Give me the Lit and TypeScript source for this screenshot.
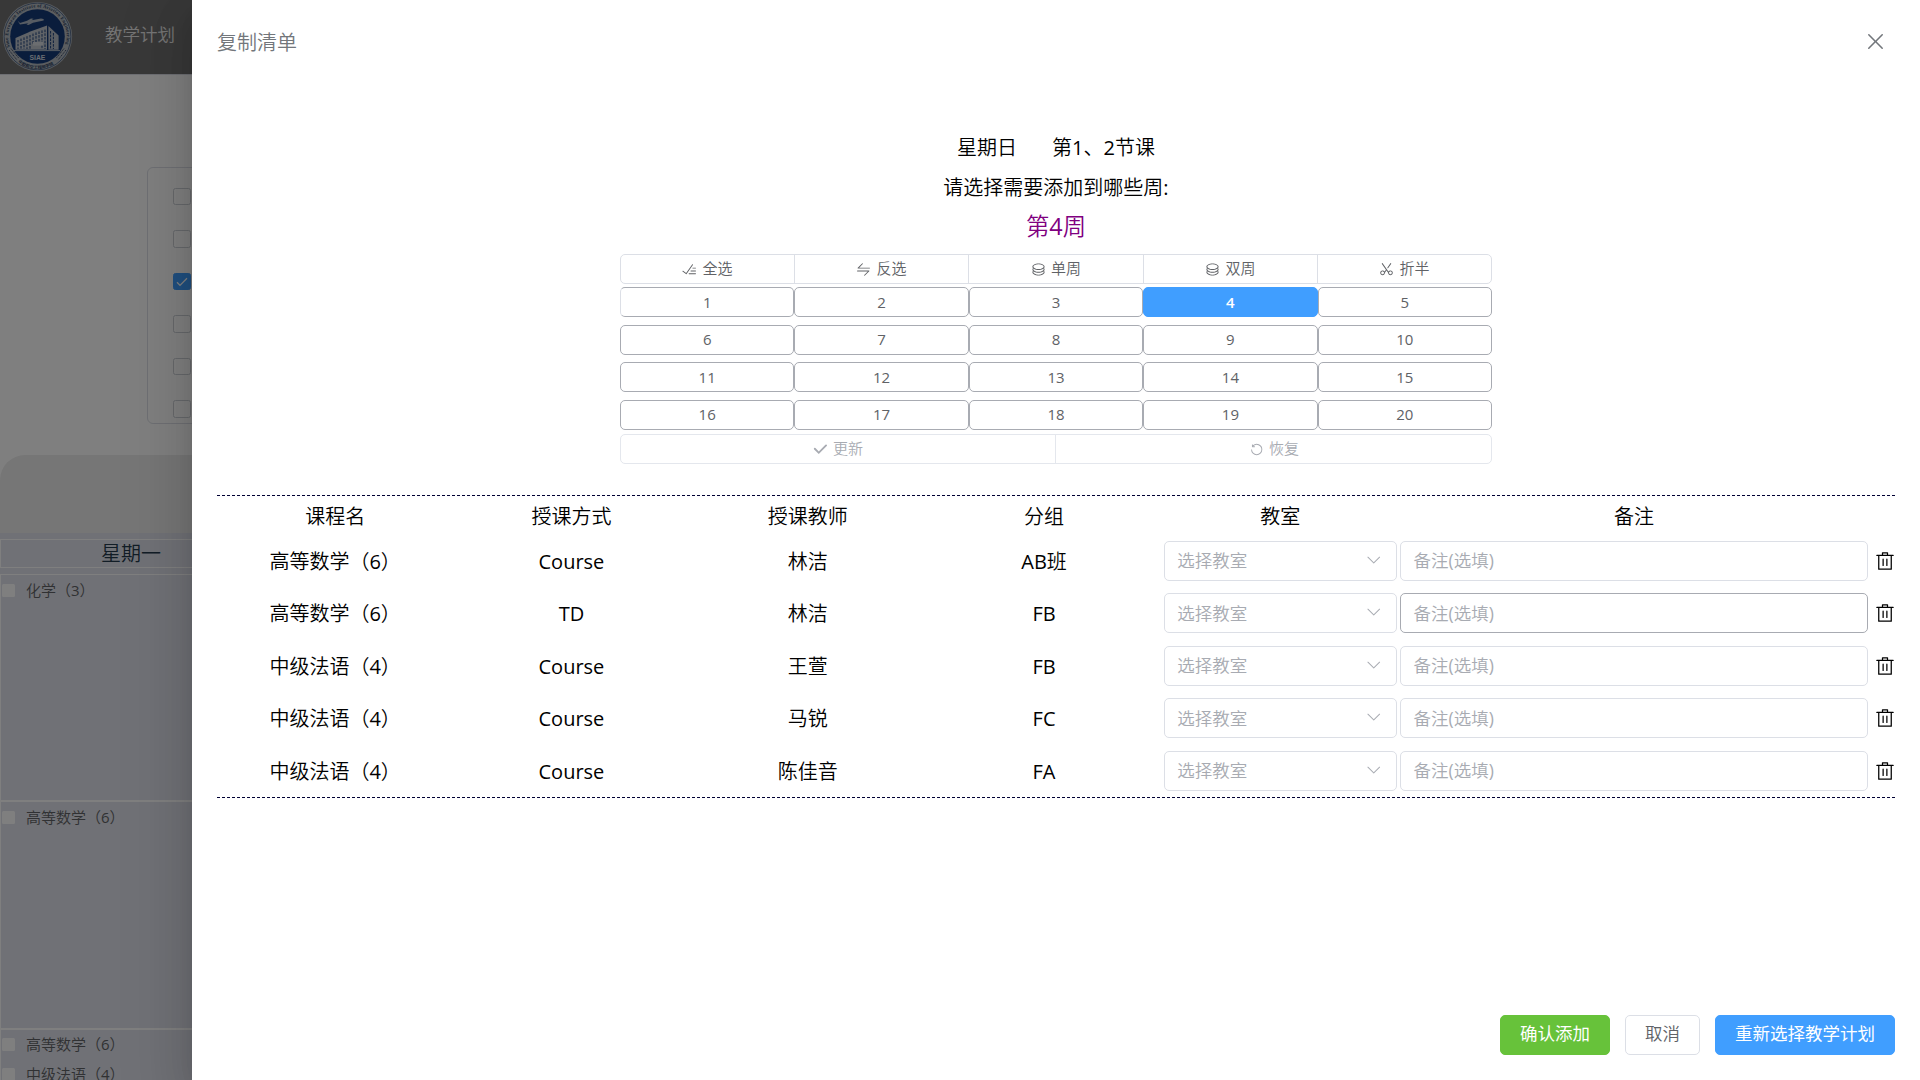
import { LitElement, html, css, svg } from "lit";
import { customElement, property } from "lit/decorators.js";
import { classMap } from "lit/directives/class-map.js";

const ICONS: Record<string, string[]> = {
  close: [
    "M764.288 214.592 512 466.88 259.712 214.592a31.936 31.936 0 0 0-45.12 45.12L466.752 512 214.528 764.224a31.936 31.936 0 1 0 45.12 45.184L512 557.184l252.288 252.288a31.936 31.936 0 0 0 45.12-45.12L557.12 512.064l252.288-252.352a31.936 31.936 0 1 0-45.12-45.184z",
  ],
  select: [
    "M77.248 415.04a64 64 0 0 1 90.496 0l226.304 226.304L846.528 188.8a64 64 0 1 1 90.56 90.496l-543.04 543.04-316.8-316.8a64 64 0 0 1 0-90.496z",
  ],
  arrow: [
    "M831.872 340.864 512 652.672 192.128 340.864a30.592 30.592 0 0 0-42.752 0 29.12 29.12 0 0 0 0 41.6L489.664 714.24a32 32 0 0 0 44.672 0l340.288-331.712a29.12 29.12 0 0 0 0-41.728 30.592 30.592 0 0 0-42.752 0z",
  ],
  trash: [
    "M160 256H96a32 32 0 0 1 0-64h256V95.936a32 32 0 0 1 32-32h256a32 32 0 0 1 32 32V192h256a32 32 0 1 1 0 64h-64v672a32 32 0 0 1-32 32H192a32 32 0 0 1-32-32V256zm448-64v-64H416v64h192zM224 896h576V256H224v640zm192-128a32 32 0 0 1-32-32V416a32 32 0 0 1 64 0v320a32 32 0 0 1-32 32zm192 0a32 32 0 0 1-32-32V416a32 32 0 0 1 64 0v320a32 32 0 0 1-32 32z",
  ],
  coin: [
    "m161.92 580.736 29.888 58.88C171.328 659.776 160 681.728 160 704c0 82.304 155.328 160 352 160s352-77.696 352-160c0-22.272-11.392-44.16-31.808-64.32l30.464-58.432C903.936 615.808 928 657.664 928 704c0 129.728-188.544 224-416 224S96 833.728 96 704c0-46.592 24.32-88.576 65.92-123.264z",
    "m161.92 388.736 29.888 58.88C171.328 467.84 160 489.792 160 512c0 82.304 155.328 160 352 160s352-77.696 352-160c0-22.272-11.392-44.16-31.808-64.32l30.464-58.432C903.936 423.808 928 465.664 928 512c0 129.728-188.544 224-416 224S96 641.728 96 512c0-46.592 24.32-88.576 65.92-123.264z",
    "M512 544c-227.456 0-416-94.272-416-224S284.544 96 512 96s416 94.272 416 224-188.544 224-416 224zm0-64c196.672 0 352-77.696 352-160S708.672 160 512 160s-352 77.696-352 160 155.328 160 352 160z",
  ],
  scissor: [
    "m512.064 578.368-106.88 152.768a160 160 0 1 1-23.36-78.208L472.96 522.56 196.864 128.256a32 32 0 1 1 52.48-36.736l393.024 561.344a160 160 0 1 1-23.36 78.208l-106.88-152.704zm54.4-189.248 208.384-297.6a32 32 0 0 1 52.48 36.736l-221.76 316.672-39.04-55.808zm-376.32 425.856a96 96 0 1 0 110.144-157.248 96 96 0 0 0-110.08 157.248zm643.84 0a96 96 0 1 0-110.08-157.248 96 96 0 0 0 110.08 157.248z",
  ],
  swap: [
    "M118.656 438.656a32 32 0 0 1 0-45.248L416 96l4.48-3.776A32 32 0 0 1 461.248 96l3.712 4.48a32.064 32.064 0 0 1-3.712 40.832L218.56 384H928a32 32 0 1 1 0 64H141.248a32 32 0 0 1-22.592-9.344zM64 608a32 32 0 0 1 32-32h786.752a32 32 0 0 1 22.656 54.592L608 928l-4.48 3.776a32.064 32.064 0 0 1-40.832-49.024L805.632 640H96a32 32 0 0 1-32-32z",
  ],
  refresh: [
    "M289.088 296.704h92.992a32 32 0 0 1 0 64H232.96a32 32 0 0 1-32-32V179.712a32 32 0 0 1 64 0v50.56a384 384 0 0 1 643.84 282.88 384 384 0 0 1-383.936 384 384 384 0 0 1-384-384h64a320 320 0 1 0 640 0 320 320 0 0 0-555.712-216.448z",
  ],
  finished: [
    "M280.768 753.728 691.456 167.04a32 32 0 1 1 52.416 36.672L314.24 817.472a32 32 0 0 1-45.44 7.296l-230.4-172.8a32 32 0 0 1 38.4-51.2l203.968 152.96zM736 448a32 32 0 1 1 0-64h192a32 32 0 1 1 0 64H736zM608 640a32 32 0 0 1 0-64h319.936a32 32 0 1 1 0 64H608zM480 832a32 32 0 1 1 0-64h447.936a32 32 0 1 1 0 64H480z",
  ],
};

@customElement("ui-icon")
class UiIcon extends LitElement {
  @property() name = "close";
  static styles = css`
    :host { display: inline-flex; width: 1em; height: 1em; flex: none; }
    .glyph { width: 100%; height: 100%; fill: currentColor; display: block; }
  `;
  render() {
    return html`<svg class="glyph" viewBox="0 0 1024 1024">
      ${(ICONS[this.name] ?? []).map((d) => svg`<path d=${d} />`)}
    </svg>`;
  }
}

@customElement("school-logo")
class SchoolLogo extends LitElement {
  static styles = css`
    :host { display: block; width: 74px; height: 74px; }
    .art { width: 74px; height: 74px; display: block; overflow: visible; }
    .ring-text { font: 700 4.6px "Liberation Serif", serif; fill: #2a3c5c; }
    .ring-cjk { font: 700 4.2px "Noto Sans CJK SC", sans-serif; fill: #2a3c5c; }
    .abbr { font: 700 6.8px "Liberation Sans", sans-serif; fill: #d3dae4; }
  `;
  render() {
    return html`<svg class="art" viewBox="0 0 74 74">
      <defs>
        <path id="arcTop" d="M10.1 47 A29.3 29.3 0 1 1 64.9 47" />
        <path id="arcBottom" d="M18 62.3 A32 32 0 0 0 57 62.3" />
      </defs>
      <circle cx="37.5" cy="36.5" r="34.6" fill="#b4bac0" />
      <circle cx="37.5" cy="36.5" r="33.4" fill="none" stroke="#2f4a76" stroke-width="0.7" />
      <circle cx="37.5" cy="36.5" r="27.3" fill="#153a78" />
      <text class="ring-text" textLength="110"><textPath href="#arcTop">Sino European Institute of Aviation Engineering</textPath></text>
      <path d="M9 50 L17 60 M11 48.6 L19 58.4 M66 50 L58 60 M64 48.6 L56 58.4" stroke="#2a3c5c" stroke-width="0.9" stroke-dasharray="1.4 0.7" />
      <text class="ring-cjk"><textPath href="#arcBottom">中欧航空工程师学院</textPath></text>
      <path d="M17.5 20.5 L20 23 L27 20.8 L31 18.6 L33.5 18.8 L31.5 20.2 L41 18.6 Q44.5 18.6 43.6 20.4 L33 22.8 L28.5 25 L26.5 24.6 L28.5 23.2 L20 24.6 Z" fill="#aeb9c6" />
      <path d="M15.5 38 L31 31.2 L47 25.6 V49.8 H15.5 Z" fill="#c0c7cf" />
      <path d="M48.4 26 L58.6 35.4 V49.8 H48.4 Z" fill="#b7bec8" />
      <path d="M18 40 V49 M21 38.6 V49 M24 37.4 V49 M27 36.2 V49 M30 35 V49 M33 33.6 V44 M36 32.4 V44 M39 31.4 V44 M42 30.4 V49 M45 29.6 V49 M50.6 31 V49 M53.4 33 V49" stroke="#1b3f7a" stroke-width="1" stroke-dasharray="2.6 1.1" />
      <rect x="33" y="42" width="10" height="3.6" fill="#d7dbe0" />
      <path d="M14 50.6 H60" stroke="#c0c7cf" stroke-width="0.9" />
      <text class="abbr" x="37.5" y="60" text-anchor="middle" textLength="15.8">SIAE</text>
    </svg>`;
  }
}

type Course = { name: string; mode: string; teacher: string; group: string; hover?: boolean };

const COURSES: Course[] = [
  { name: "高等数学（6）", mode: "Course", teacher: "林洁", group: "AB班" },
  { name: "高等数学（6）", mode: "TD", teacher: "林洁", group: "FB", hover: true },
  { name: "中级法语（4）", mode: "Course", teacher: "王萱", group: "FB" },
  { name: "中级法语（4）", mode: "Course", teacher: "马锐", group: "FC" },
  { name: "中级法语（4）", mode: "Course", teacher: "陈佳音", group: "FA" },
];

const TOOLS = [
  ["finished", "全选"],
  ["swap", "反选"],
  ["coin", "单周"],
  ["coin", "双周"],
  ["scissor", "折半"],
];

const SLOTS = [["化学（3）"], ["高等数学（6）"], ["高等数学（6）", "中级法语（4）"]];

/** Chinese runs are set in a lighter weight; Latin letters and digits stay regular. */
const mixed = (text: string) =>
  text
    .split(/([A-Za-z0-9():]+)/)
    .filter(Boolean)
    .map((part) => (/^[A-Za-z0-9():]/.test(part) ? html`<span class="latin">${part}</span>` : part));

@customElement("app-root")
class AppRoot extends LitElement {
  static styles = css`
    :host { display: block; font-family: "Open Sans", "Noto Sans CJK SC", sans-serif; font-weight: 350; color: #000; }
    * { box-sizing: border-box; }
    .latin { font-weight: 400; }
    .stage { position: relative; width: 1920px; height: 1080px; overflow: hidden; background: #fff; }

    .page { display: flex; flex-direction: column; width: 1920px; height: 1080px; overflow: hidden; }
    .nav { display: flex; height: 75px; background: #717171; border-bottom: 1px solid #dcdfe6; flex: none; }
    .nav-item { width: 156px; padding-left: 31px; font-size: 17.5px; line-height: 69px; color: #fff; opacity: 0.85; }
    .filters { height: 257px; width: 600px; margin: 92px 0 31px 147px; border: 1px solid #dcdfe6; border-radius: 6px; flex: none;
      display: flex; flex-direction: column; gap: 25px; padding: 19.75px 0 0 25px; }
    .box { width: 18px; height: 17.5px; border: 1px solid #cdd0d6; border-radius: 2.5px; flex: none; display: flex;
      align-items: center; justify-content: center; color: #fff; }
    .box.on { background: #409eff; border-color: #409eff; }
    .tick { width: 12px; height: 10px; fill: none; stroke: #fff; stroke-width: 1.3; }
    .tab { height: 78px; background: #ededed; border-radius: 25px 0 0 0; flex: none; }
    .grid { background: #e1e3ec; flex: none; display: flex; flex-direction: column; padding-top: 6px; }
    .day { height: 29px; margin-bottom: 6px; border: 1px solid #fff; flex: none; font-size: 20px; line-height: 28px; padding-left: 100px; color: #253a4d; }
    .slot { height: 227.5px; border-left: 1px solid #fff; border-bottom: 2px solid #fff; flex: none; }
    .slot:nth-of-type(2) { border-top: 1px solid #fff; height: 228px; }
    .lesson { display: flex; align-items: center; height: 30px; gap: 11px; padding-left: 1px; font-size: 15px; line-height: 20px; color: #606266; }
    .lesson-text { padding-bottom: 1px; }
    .lesson-box { width: 13px; height: 13px; background: #fff; border-radius: 1.5px; }

    .mask { position: absolute; inset: 0; background: rgba(0, 0, 0, 0.5); display: flex; justify-content: flex-end; }
    .drawer { width: 1728px; height: 1080px; background: #fff; display: flex; flex-direction: column; padding: 25px;
      box-shadow: 0 20px 60px 20px rgba(0, 0, 0, 0.08), 0 15px 40px rgba(0, 0, 0, 0.12), 0 10px 20px -10px rgba(0, 0, 0, 0.16); }
    .head { display: flex; justify-content: space-between; align-items: center; height: 33px; padding-right: 7px; color: #72767b; font-size: 20px; flex: none; }
    .close { font-size: 25px; }
    .intro { margin-top: 70px; text-align: center; flex: none; }
    .line { font-size: 20px; line-height: 40px; height: 40px; display: flex; justify-content: center; gap: 35px; }
    .week { font-size: 23.4px; line-height: 37px; height: 37px; color: #800080; }
    .picker { width: 872px; margin: 9px auto 0; font-size: 15px; color: #606266; flex: none; }
    .tools, .acts { display: grid; grid-template-columns: 173px 174px 175px 174px 174px; height: 30px; border: 1px solid #dcdfe6; border-radius: 5px; }
    .acts { grid-template-columns: 434px 436px; color: #a8abb2; border-color: #e4e7ed; margin-top: 4.5px; }
    .tool { display: flex; align-items: center; justify-content: center; gap: 5px; line-height: 20px; border-left: 1px solid #dcdfe6; }
    .label { padding-bottom: 2px; }
    .acts .tool { border-color: #e4e7ed; }
    .acts .tool:last-child { padding-left: 1px; }
    .tool:first-child { border-left: none; }
    .weeks { display: grid; grid-template-columns: repeat(5, 1fr); grid-auto-rows: 30px; row-gap: 7.5px; margin-top: 3px; font-weight: 400; }
    .num { border: 1px solid #a8abb2; border-radius: 5px; display: flex; align-items: center; justify-content: center; padding-bottom: 0.6px; }
    .num.first { border-left-color: #dcdfe6; }
    .num.on { background: #409eff; border-color: #409eff; color: #fff; font-weight: 600; }

    .table { margin-top: 31px; border-top: 1px dashed #000033; border-bottom: 1px dashed #000033; height: 303px; font-size: 20px; flex: none; }
    .row { display: grid; grid-template-columns: repeat(5, 236.3px) 471.2px 1fr; height: 52.5px; align-items: center; text-align: center; }
    .row.title { height: 38.6px; }
    .cell { line-height: 30px; padding-top: 2px; }
    .title .cell { padding-top: 4px; }
    .field { margin: 0 2px; height: 40px; border: 1px solid #dcdfe6; border-radius: 5px; display: flex; align-items: center; justify-content: space-between;
      padding: 0 13.5px 2.6px 12px; font-size: 17.5px; color: #a8abb2; }
    .field.room { margin-right: 1.2px; }
    .field.hover { border-color: #a8abb2; }
    .bin { font-size: 20px; justify-self: end; }

    .foot { margin-top: auto; display: flex; justify-content: flex-end; gap: 15px; font-size: 17.5px; flex: none; }
    .btn { height: 40px; line-height: 34px; padding: 0; width: 110px; text-align: center; border-radius: 5px; border: 1px solid #dcdfe6; color: #606266; }
    .btn.cancel { width: 75px; }
    .btn.ok { background: #67c23a; border-color: #67c23a; color: #fff; font-weight: 400; }
    .btn.again { background: #409eff; border-color: #409eff; color: #fff; width: 180px; font-weight: 400; }
  `;

  render() {
    return html`<div class="stage">
      <div class="page">
        <div class="nav">
          <school-logo></school-logo>
          <div class="nav-item">教学计划</div>
        </div>
        <div class="filters">
          ${[0, 1, 2, 3, 4, 5].map(
            (i) => html`<div class=${classMap({ box: true, on: i === 2 })}>
              ${i === 2 ? html`<svg class="tick" viewBox="0 0 12 10"><path d="M1 5.2 4 8.4 11 1.2" /></svg>` : ""}
            </div>`
          )}
        </div>
        <div class="tab"></div>
        <div class="grid">
          <div class="day">星期一</div>
          ${SLOTS.map(
            (slot) => html`<div class="slot">
              ${slot.map((t) => html`<div class="lesson"><span class="lesson-box"></span><span class="lesson-text">${mixed(t)}</span></div>`)}
            </div>`
          )}
        </div>
      </div>
      <div class="mask">
        <div class="drawer">
          <div class="head"><span>复制清单</span><ui-icon class="close" name="close"></ui-icon></div>
          <div class="intro">
            <div class="line"><span>星期日</span><span>${mixed("第1、2节课")}</span></div>
            <div class="line"><span>${mixed("请选择需要添加到哪些周:")}</span></div>
            <div class="week">${mixed("第4周")}</div>
          </div>
          <div class="picker">
            <div class="tools">
              ${TOOLS.map(([icon, label]) => html`<div class="tool"><ui-icon name=${icon}></ui-icon><span class="label">${label}</span></div>`)}
            </div>
            <div class="weeks">
              ${Array.from({ length: 20 }, (_, i) => i + 1).map(
                (n) => html`<div class=${classMap({ num: true, on: n === 4, first: n === 1 })}>${n}</div>`
              )}
            </div>
            <div class="acts">
              <div class="tool"><ui-icon name="select"></ui-icon><span class="label">更新</span></div>
              <div class="tool"><ui-icon name="refresh"></ui-icon><span class="label">恢复</span></div>
            </div>
          </div>
          <div class="table">
            <div class="row title">
              ${["课程名", "授课方式", "授课教师", "分组", "教室", "备注"].map((t) => html`<div class="cell">${t}</div>`)}
            </div>
            ${COURSES.map(
              (c) => html`<div class="row">
                <div class="cell">${mixed(c.name)}</div>
                <div class="cell">${mixed(c.mode)}</div>
                <div class="cell">${c.teacher}</div>
                <div class="cell">${mixed(c.group)}</div>
                <div class="field room"><span>选择教室</span><ui-icon name="arrow"></ui-icon></div>
                <div class=${classMap({ field: true, hover: !!c.hover })}><span>${mixed("备注(选填)")}</span></div>
                <ui-icon class="bin" name="trash"></ui-icon>
              </div>`
            )}
          </div>
          <div class="foot">
            <div class="btn ok">确认添加</div>
            <div class="btn cancel">取消</div>
            <div class="btn again">重新选择教学计划</div>
          </div>
        </div>
      </div>
    </div>`;
  }
}
